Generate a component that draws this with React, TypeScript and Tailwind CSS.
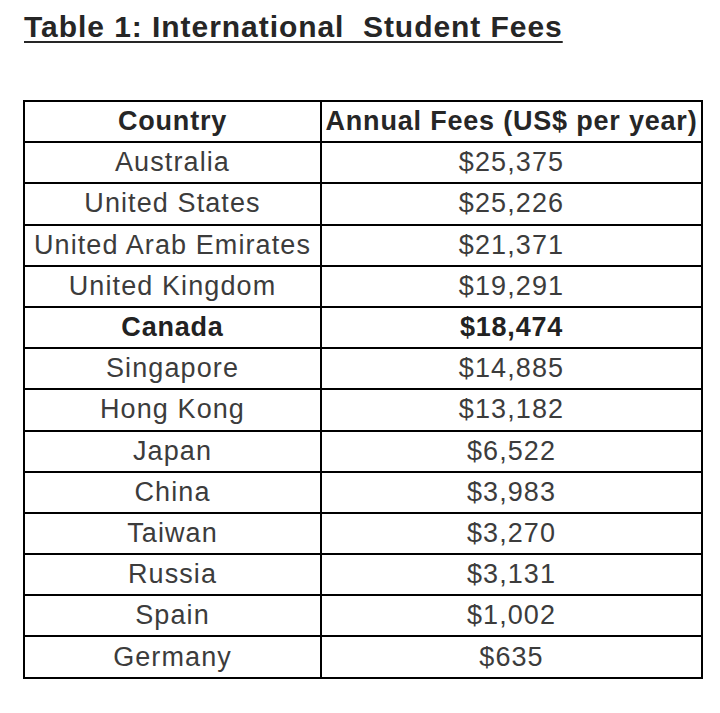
const rows: [string, string, boolean?][] = [
  ["Australia", "$25,375"],
  ["United States", "$25,226"],
  ["United Arab Emirates", "$21,371"],
  ["United Kingdom", "$19,291"],
  ["Canada", "$18,474", true],
  ["Singapore", "$14,885"],
  ["Hong Kong", "$13,182"],
  ["Japan", "$6,522"],
  ["China", "$3,983"],
  ["Taiwan", "$3,270"],
  ["Russia", "$3,131"],
  ["Spain", "$1,002"],
  ["Germany", "$635"],
];

export default function App() {
  return (
    <div className="w-[720px] h-[713px] bg-white font-['Liberation_Sans',Arial,sans-serif] overflow-hidden">
      <div className="pt-[9px] pl-[24px]">
        <h1 className="text-[30px] leading-[36px] font-bold tracking-[0.95px] text-[#262626] underline decoration-2 underline-offset-[4px] whitespace-pre">
          {"Table 1: International  Student Fees"}
        </h1>
      </div>

      <table className="mt-[55px] ml-[23px] w-[680px] table-fixed border-collapse border-2 border-black">
        <thead>
          <tr className="h-[41.2px]">
            <th className="w-[297px] border-2 border-black p-0 text-[27px] font-bold tracking-[0.8px] text-[#262626] leading-none">
              Country
            </th>
            <th className="border-2 border-black p-0 text-[27px] font-bold tracking-[0.8px] text-[#262626] leading-none whitespace-nowrap">
              Annual Fees (US$ per year)
            </th>
          </tr>
        </thead>
        <tbody>
          {rows.map(([country, fee, bold]) => (
            <tr key={country} className="h-[41.2px]">
              <td
                className={
                  bold
                    ? "border-2 border-black p-0 text-center text-[27px] font-bold tracking-[0.8px] text-[#222] leading-none"
                    : "border-2 border-black p-0 text-center text-[27px] tracking-[1.1px] text-[#3c3c3c] leading-none whitespace-nowrap"
                }
              >
                {country}
              </td>
              <td
                className={
                  bold
                    ? "border-2 border-black p-0 text-center text-[27px] font-bold tracking-[0.8px] text-[#222] leading-none"
                    : "border-2 border-black p-0 text-center text-[27px] tracking-[1.1px] text-[#3c3c3c] leading-none"
                }
              >
                {fee}
              </td>
            </tr>
          ))}
        </tbody>
      </table>
    </div>
  );
}
